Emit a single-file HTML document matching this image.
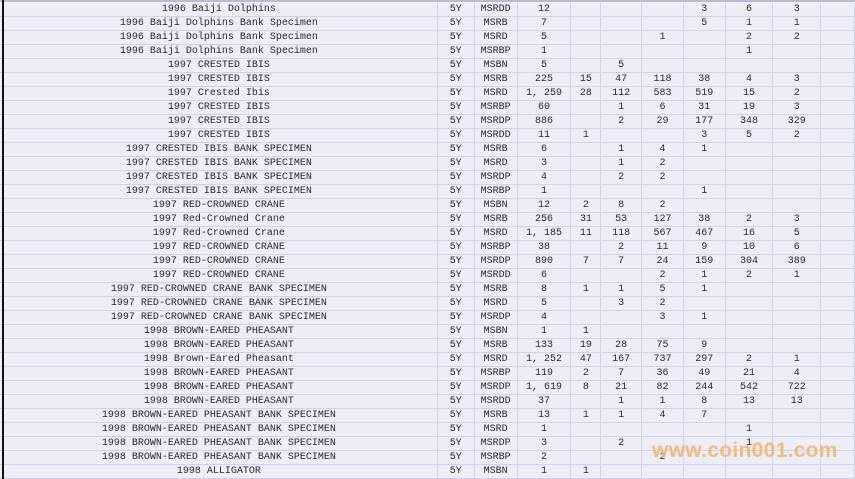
<!DOCTYPE html>
<html><head><meta charset="utf-8"><style>
body{margin:0;width:855px;height:479px;overflow:hidden;background:#ecedf7;position:relative}
.l{position:absolute;left:2px;top:0;width:2px;height:479px;background:#111}
.top{position:absolute;left:0;top:0;width:855px;height:2px;background:#b8bccc}
table{position:absolute;left:0;top:3px;border-collapse:collapse;table-layout:fixed;font:10px "Liberation Mono",monospace;color:#2a2a2a}
td{height:13px;border-bottom:1px solid #cfd3e6;border-right:1px solid #cfd3e6;text-align:center;padding:0;white-space:nowrap;line-height:13px;overflow:hidden}
td:first-child{padding-left:1px}
.wm{position:absolute;left:652px;top:439px;font:bold 21px "Liberation Sans",sans-serif;color:#f3b66e;opacity:.9;letter-spacing:0.3px}
</style></head><body>
<table>
<colgroup><col style="width:439px"><col style="width:37px"><col style="width:43px"><col style="width:54px"><col style="width:30px"><col style="width:41px"><col style="width:42px"><col style="width:42px"><col style="width:48px"><col style="width:48px"><col style="width:34px"></colgroup>
<tr><td>1996 Baiji Dolphins</td><td>5Y</td><td>MSRDD</td><td>12</td><td></td><td></td><td></td><td>3</td><td>6</td><td>3</td><td></td></tr>
<tr><td>1996 Baiji Dolphins Bank Specimen</td><td>5Y</td><td>MSRB</td><td>7</td><td></td><td></td><td></td><td>5</td><td>1</td><td>1</td><td></td></tr>
<tr><td>1996 Baiji Dolphins Bank Specimen</td><td>5Y</td><td>MSRD</td><td>5</td><td></td><td></td><td>1</td><td></td><td>2</td><td>2</td><td></td></tr>
<tr><td>1996 Baiji Dolphins Bank Specimen</td><td>5Y</td><td>MSRBP</td><td>1</td><td></td><td></td><td></td><td></td><td>1</td><td></td><td></td></tr>
<tr><td>1997 CRESTED IBIS</td><td>5Y</td><td>MSBN</td><td>5</td><td></td><td>5</td><td></td><td></td><td></td><td></td><td></td></tr>
<tr><td>1997 CRESTED IBIS</td><td>5Y</td><td>MSRB</td><td>225</td><td>15</td><td>47</td><td>118</td><td>38</td><td>4</td><td>3</td><td></td></tr>
<tr><td>1997 Crested Ibis</td><td>5Y</td><td>MSRD</td><td>1, 259</td><td>28</td><td>112</td><td>583</td><td>519</td><td>15</td><td>2</td><td></td></tr>
<tr><td>1997 CRESTED IBIS</td><td>5Y</td><td>MSRBP</td><td>60</td><td></td><td>1</td><td>6</td><td>31</td><td>19</td><td>3</td><td></td></tr>
<tr><td>1997 CRESTED IBIS</td><td>5Y</td><td>MSRDP</td><td>886</td><td></td><td>2</td><td>29</td><td>177</td><td>348</td><td>329</td><td></td></tr>
<tr><td>1997 CRESTED IBIS</td><td>5Y</td><td>MSRDD</td><td>11</td><td>1</td><td></td><td></td><td>3</td><td>5</td><td>2</td><td></td></tr>
<tr><td>1997 CRESTED IBIS BANK SPECIMEN</td><td>5Y</td><td>MSRB</td><td>6</td><td></td><td>1</td><td>4</td><td>1</td><td></td><td></td><td></td></tr>
<tr><td>1997 CRESTED IBIS BANK SPECIMEN</td><td>5Y</td><td>MSRD</td><td>3</td><td></td><td>1</td><td>2</td><td></td><td></td><td></td><td></td></tr>
<tr><td>1997 CRESTED IBIS BANK SPECIMEN</td><td>5Y</td><td>MSRDP</td><td>4</td><td></td><td>2</td><td>2</td><td></td><td></td><td></td><td></td></tr>
<tr><td>1997 CRESTED IBIS BANK SPECIMEN</td><td>5Y</td><td>MSRBP</td><td>1</td><td></td><td></td><td></td><td>1</td><td></td><td></td><td></td></tr>
<tr><td>1997 RED-CROWNED CRANE</td><td>5Y</td><td>MSBN</td><td>12</td><td>2</td><td>8</td><td>2</td><td></td><td></td><td></td><td></td></tr>
<tr><td>1997 Red-Crowned Crane</td><td>5Y</td><td>MSRB</td><td>256</td><td>31</td><td>53</td><td>127</td><td>38</td><td>2</td><td>3</td><td></td></tr>
<tr><td>1997 Red-Crowned Crane</td><td>5Y</td><td>MSRD</td><td>1, 185</td><td>11</td><td>118</td><td>567</td><td>467</td><td>16</td><td>5</td><td></td></tr>
<tr><td>1997 RED-CROWNED CRANE</td><td>5Y</td><td>MSRBP</td><td>38</td><td></td><td>2</td><td>11</td><td>9</td><td>10</td><td>6</td><td></td></tr>
<tr><td>1997 RED-CROWNED CRANE</td><td>5Y</td><td>MSRDP</td><td>890</td><td>7</td><td>7</td><td>24</td><td>159</td><td>304</td><td>389</td><td></td></tr>
<tr><td>1997 RED-CROWNED CRANE</td><td>5Y</td><td>MSRDD</td><td>6</td><td></td><td></td><td>2</td><td>1</td><td>2</td><td>1</td><td></td></tr>
<tr><td>1997 RED-CROWNED CRANE BANK SPECIMEN</td><td>5Y</td><td>MSRB</td><td>8</td><td>1</td><td>1</td><td>5</td><td>1</td><td></td><td></td><td></td></tr>
<tr><td>1997 RED-CROWNED CRANE BANK SPECIMEN</td><td>5Y</td><td>MSRD</td><td>5</td><td></td><td>3</td><td>2</td><td></td><td></td><td></td><td></td></tr>
<tr><td>1997 RED-CROWNED CRANE BANK SPECIMEN</td><td>5Y</td><td>MSRDP</td><td>4</td><td></td><td></td><td>3</td><td>1</td><td></td><td></td><td></td></tr>
<tr><td>1998 BROWN-EARED PHEASANT</td><td>5Y</td><td>MSBN</td><td>1</td><td>1</td><td></td><td></td><td></td><td></td><td></td><td></td></tr>
<tr><td>1998 BROWN-EARED PHEASANT</td><td>5Y</td><td>MSRB</td><td>133</td><td>19</td><td>28</td><td>75</td><td>9</td><td></td><td></td><td></td></tr>
<tr><td>1998 Brown-Eared Pheasant</td><td>5Y</td><td>MSRD</td><td>1, 252</td><td>47</td><td>167</td><td>737</td><td>297</td><td>2</td><td>1</td><td></td></tr>
<tr><td>1998 BROWN-EARED PHEASANT</td><td>5Y</td><td>MSRBP</td><td>119</td><td>2</td><td>7</td><td>36</td><td>49</td><td>21</td><td>4</td><td></td></tr>
<tr><td>1998 BROWN-EARED PHEASANT</td><td>5Y</td><td>MSRDP</td><td>1, 619</td><td>8</td><td>21</td><td>82</td><td>244</td><td>542</td><td>722</td><td></td></tr>
<tr><td>1998 BROWN-EARED PHEASANT</td><td>5Y</td><td>MSRDD</td><td>37</td><td></td><td>1</td><td>1</td><td>8</td><td>13</td><td>13</td><td></td></tr>
<tr><td>1998 BROWN-EARED PHEASANT BANK SPECIMEN</td><td>5Y</td><td>MSRB</td><td>13</td><td>1</td><td>1</td><td>4</td><td>7</td><td></td><td></td><td></td></tr>
<tr><td>1998 BROWN-EARED PHEASANT BANK SPECIMEN</td><td>5Y</td><td>MSRD</td><td>1</td><td></td><td></td><td></td><td></td><td>1</td><td></td><td></td></tr>
<tr><td>1998 BROWN-EARED PHEASANT BANK SPECIMEN</td><td>5Y</td><td>MSRDP</td><td>3</td><td></td><td>2</td><td></td><td></td><td>1</td><td></td><td></td></tr>
<tr><td>1998 BROWN-EARED PHEASANT BANK SPECIMEN</td><td>5Y</td><td>MSRBP</td><td>2</td><td></td><td></td><td>2</td><td></td><td></td><td></td><td></td></tr>
<tr><td>1998 ALLIGATOR</td><td>5Y</td><td>MSBN</td><td>1</td><td>1</td><td></td><td></td><td></td><td></td><td></td><td></td></tr>
</table>
<div class="top"></div><div class="l"></div>
<div class="wm">www.coin001.com</div>
</body></html>
